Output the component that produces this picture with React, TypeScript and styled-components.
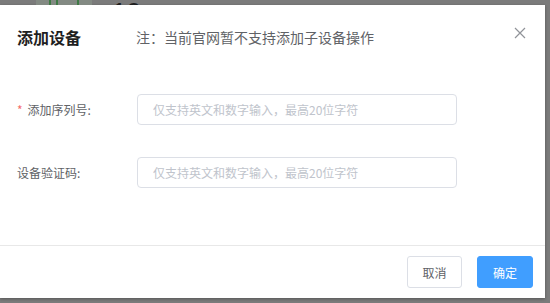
import React, { useState } from "react";
import styled, { createGlobalStyle } from "styled-components";

const GlobalStyle = createGlobalStyle`
  html, body {
    margin: 0;
    padding: 0;
    background: #7b7b7b;
  }
  * {
    box-sizing: border-box;
  }
`;

const App = () => {
  const [serial, setSerial] = useState("");
  const [code, setCode] = useState("");

  return (
    <Page>
      <GlobalStyle />
      <BehindStrip>
        <GreenCard>
          <GreenBar />
          <GreenBar />
          <GreenBar $wide />
        </GreenCard>
        <BigNumber>10</BigNumber>
      </BehindStrip>
      <Dialog>
        <Header>
          <Title>添加设备</Title>
          <Note>注：当前官网暂不支持添加子设备操作</Note>
          <CloseBtn aria-label="close">
            <svg width="12" height="12" viewBox="0 0 12 12">
              <path d="M1 1 L11 11 M11 1 L1 11" stroke="#909399" strokeWidth="1.2" fill="none" />
            </svg>
          </CloseBtn>
        </Header>
        <Body>
          <FormRow>
            <Label>
              <Star>*</Star>添加序列号:
            </Label>
            <Input
              value={serial}
              onChange={(e) => setSerial(e.target.value)}
              placeholder="仅支持英文和数字输入，最高20位字符"
            />
          </FormRow>
          <FormRow>
            <Label>设备验证码:</Label>
            <Input
              value={code}
              onChange={(e) => setCode(e.target.value)}
              placeholder="仅支持英文和数字输入，最高20位字符"
            />
          </FormRow>
        </Body>
        <Footer>
          <Button>取消</Button>
          <Button $primary>确定</Button>
        </Footer>
      </Dialog>
    </Page>
  );
};

export default App;

const Page = styled.div`
  width: 550px;
  height: 303px;
  overflow: hidden;
  background: #7b7b7b;
  font-family: "Noto Sans CJK SC", "Noto Sans", sans-serif;
`;

// page content peeking out above the dialog, under the mask
const BehindStrip = styled.div`
  height: 5px;
  overflow: hidden;
  display: flex;
  align-items: flex-end;
  padding-left: 36px;
`;

const GreenCard = styled.div`
  width: 56px;
  height: 5px;
  background: #838a83;
  display: flex;
  gap: 5px;
  padding-left: 13px;
`;

const GreenBar = styled.div<{ $wide?: boolean }>`
  width: 2px;
  height: 5px;
  background: #3f7a45;
  margin-left: ${(p) => (p.$wide ? "14px" : "0")};
`;

const BigNumber = styled.div`
  margin-left: 20px;
  font-family: "Liberation Sans", sans-serif;
  font-size: 26px;
  line-height: 26px;
  color: #1e1e1e;
  align-self: flex-end;
  margin-bottom: -20px;
`;

const Dialog = styled.div`
  width: 545px;
  height: 293px;
  background: #fff;
  display: flex;
  flex-direction: column;
  box-shadow: 0 1px 3px rgba(0, 0, 0, 0.3);
`;

const Header = styled.div`
  height: 64px;
  display: flex;
  align-items: center;
  padding: 0 19px 0 17px;
`;

const Title = styled.div`
  font-size: 16px;
  font-weight: 700;
  color: #1f1f1f;
  line-height: 20px;
  width: 119px;
`;

const Note = styled.div`
  font-size: 14px;
  color: #606266;
  line-height: 20px;
`;

const CloseBtn = styled.button`
  margin-left: auto;
  border: none;
  background: none;
  padding: 0;
  width: 12px;
  height: 12px;
  display: flex;
  cursor: pointer;
  margin-top: -9px;
`;

const Body = styled.div`
  flex: 1;
  display: flex;
  flex-direction: column;
  gap: 32px;
  padding: 25px 0 0 17px;
`;

const FormRow = styled.div`
  display: flex;
  align-items: center;
  height: 31px;
`;

const Label = styled.label`
  width: 120px;
  font-size: 12px;
  color: #606266;
  line-height: 16px;
`;

const Star = styled.span`
  color: #f56c6c;
  margin-right: 5px;
`;

const Input = styled.input`
  width: 320px;
  height: 31px;
  border: 1px solid #dcdfe6;
  border-radius: 4px;
  padding: 0 15px;
  font-size: 12px;
  font-family: inherit;
  color: #606266;
  outline: none;
  &::placeholder {
    color: #c0c4cc;
  }
`;

const Footer = styled.div`
  height: 53px;
  border-top: 1px solid #e8e8e8;
  display: flex;
  justify-content: flex-end;
  align-items: flex-start;
  gap: 15px;
  padding: 10px 12px 0 0;
`;

const Button = styled.button<{ $primary?: boolean }>`
  width: ${(p) => (p.$primary ? "56px" : "55px")};
  height: 32px;
  border-radius: 3px;
  font-size: 12px;
  font-family: inherit;
  border: 1px solid ${(p) => (p.$primary ? "#409eff" : "#dcdfe6")};
  background: ${(p) => (p.$primary ? "#409eff" : "#fff")};
  color: ${(p) => (p.$primary ? "#fff" : "#606266")};
  cursor: pointer;
  padding: 0;
`;
